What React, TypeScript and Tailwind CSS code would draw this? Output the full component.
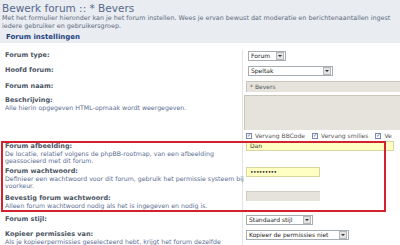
import React from "react";

const font = { fontFamily: "'DejaVu Sans', Verdana, sans-serif" };

function Select({ label, width }: { label: string; width: string }) {
  return (
    <div className={`flex items-center h-[10px] border border-[#a5acb2] bg-white ${width}`}>
      <span className="flex-1 pl-[2px] text-[6px] leading-none text-[#222]">{label}</span>
      <span className="w-[8px] h-[8px] mr-[1px] bg-[#e3e3e3] border border-[#b8b8b8] flex items-center justify-center">
        <span className="w-0 h-0 border-l-[2px] border-r-[2px] border-t-[2px] border-l-transparent border-r-transparent border-t-[#333]" />
      </span>
    </div>
  );
}

function Check({ label }: { label: string }) {
  return (
    <div className="flex items-center gap-[3px] shrink-0">
      <span className="w-[6px] h-[6px] border border-[#7a8aa8] bg-white flex items-center justify-center text-[5px] leading-none text-[#2d4a86]">✓</span>
      <span className="text-[6px] text-[#555]">{label}</span>
    </div>
  );
}

function Row({
  label,
  desc,
  h,
  children,
}: {
  label: string;
  desc?: string[];
  h: string;
  children?: React.ReactNode;
}) {
  return (
    <div className={`flex ${h}`}>
      <div className="w-[243px] pl-[5px] pt-[2px] border-r border-[#e4e4e4]">
        <div className="text-[6.5px] font-bold leading-[7px] text-[#4b5563]">{label}</div>
        {desc?.map((d) => (
          <div key={d} className="text-[6.25px] leading-[7px] text-[#5b6f93] whitespace-nowrap">
            {d}
          </div>
        ))}
      </div>
      <div className="flex-1 pl-[3px]">{children}</div>
    </div>
  );
}

export default function App() {
  return (
    <div className="relative w-[400px] h-[245px] overflow-hidden bg-white" style={font}>
      <div className="bg-[#e9ecf0] h-[43px] pl-[2px] pt-[2px]">
        <div className="text-[10.5px] leading-[12px] text-[#55688c]">Bewerk forum :: * Bevers</div>
        <div className="text-[6.4px] leading-[7.5px] text-[#5e6b82] whitespace-nowrap mt-[1px] overflow-hidden">
          Met het formulier hieronder kan je het forum instellen. Wees je ervan bewust dat moderatie en berichtenaantallen ingest
        </div>
        <div className="text-[6.4px] leading-[7.5px] text-[#5e6b82]">iedere gebruiker en gebruikersgroep.</div>
        <div className="pl-[4px] mt-[2px] text-[7px] font-bold text-[#1d4380]">Forum instellingen</div>
      </div>

      <div className="pt-[7px]">
        <Row label="Forum type:" h="h-[15px]">
          <div className="pl-[2px] pt-[1px]">
            <Select label="Forum" width="w-[38px]" />
          </div>
        </Row>
        <Row label="Hoofd forum:" h="h-[16px]">
          <div className="pl-[2px] pt-[1px]">
            <Select label="Speltak" width="w-[85px]" />
          </div>
        </Row>
        <Row label="Forum naam:" h="h-[14px]">
          <div className="h-[11px] bg-[#e6e3dd] border-t border-l border-[#c9c5bd] text-[6px] leading-[10px] pl-[3px] text-[#555]">* Bevers</div>
        </Row>
        <Row label="Beschrijving:" desc={["Alle hierin opgegeven HTML-opmaak wordt weergegeven."]} h="h-[46px]">
          <div className="h-[35px] bg-[#e6e3dd] border-t border-l border-[#c9c5bd] -ml-[2px]" />
          <div className="flex gap-[7px] pt-[1px] overflow-hidden">
            <Check label="Vervang BBCode" />
            <Check label="Vervang smilies" />
            <Check label="Ve" />
          </div>
        </Row>
        <Row
          label="Forum afbeelding:"
          desc={["De locatie, relatief volgens de phpBB-rootmap, van een afbeelding", "geassocieerd met dit forum."]}
          h="h-[25px]"
        >
          <div className="w-[148px] h-[10px] bg-[#ffffc4] border border-[#d6d6a0] text-[6px] leading-[8px] pl-[3px] text-[#333]">Dan</div>
        </Row>
        <Row
          label="Forum wachtwoord:"
          desc={["Definieer een wachtwoord voor dit forum, gebruik het permissie systeem bij", "voorkeur."]}
          h="h-[27px]"
        >
          <div className="w-[74px] h-[10px] mt-[1px] bg-[#ffffc4] border border-[#d6d6a0] text-[6px] leading-[8px] pl-[3px] text-[#222] tracking-[-0.6px]">•••••••••</div>
        </Row>
        <Row label="Bevestig forum wachtwoord:" desc={["Alleen forum wachtwoord nodig als het is ingegeven en nodig is."]} h="h-[21px]">
          <div className="w-[74px] h-[10px] mt-[-2px] bg-[#e6e3dd] border-t border-l border-[#cfcbc3]" />
        </Row>
        <Row label="Forum stijl:" h="h-[15px]">
          <div className="pt-[1px]">
            <Select label="Standaard stijl" width="w-[67px]" />
          </div>
        </Row>
        <Row
          label="Kopieer permissies van:"
          desc={["Als je kopieerpermissies geselecteerd hebt, krijgt het forum dezelfde"]}
          h="h-[20px]"
        >
          <div className="pt-[1px]">
            <Select label="Kopieer de permissies niet" width="w-[103px]" />
          </div>
        </Row>
      </div>

      <div className="absolute left-[1px] top-[141px] w-[385px] h-[71px] border-2 border-[#d3212d]" />
    </div>
  );
}
